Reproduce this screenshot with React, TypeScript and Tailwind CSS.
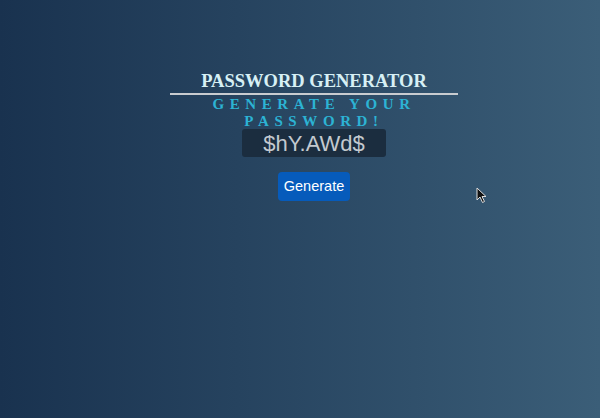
const App = () => {
  return (
    <main className="min-h-[418px] w-full bg-gradient-to-r from-[#19324f] to-[#3b5e78] relative overflow-hidden">
      <div className="flex justify-center pl-[28px] pt-[70px]">
        <div className="w-[288px] flex flex-col items-center">
          <h1 className="text-[18.5px] leading-[22px] font-bold text-[#d7f0f5] font-['Liberation_Serif',serif] w-full text-center border-b-2 border-[#c9ccd0] pb-[1px]">
            PASSWORD GENERATOR
          </h1>
          <p className="text-[15px] leading-[17px] font-bold text-[#2cb3d4] font-['Liberation_Serif',serif] tracking-[5.6px] text-center mt-[1px]">
            GENERATE YOUR PASSWORD!
          </p>
          <div className="mt-[-1px] w-[144px] h-[28px] rounded-[3px] bg-[#1b2d3f] flex items-center justify-center text-[22px] text-[#c3c9cf] font-['Liberation_Sans',sans-serif]">
            $hY.AWd$
          </div>
          <button className="mt-[15px] w-[72px] h-[29px] rounded-[4px] bg-[#065bbb] text-white text-[14.5px] font-['Liberation_Sans',sans-serif]">
            Generate
          </button>
        </div>
      </div>
      <svg
        className="absolute left-[476px] top-[187px]"
        width="12"
        height="17"
        viewBox="0 0 12 17"
      >
        <path
          d="M1 1 L1 13 L4 10 L6.5 15.5 L8.5 14.5 L6 9.5 L10 9.5 Z"
          fill="#111"
          stroke="#ddd"
          strokeWidth="1"
        />
      </svg>
    </main>
  );
};

export default App;
